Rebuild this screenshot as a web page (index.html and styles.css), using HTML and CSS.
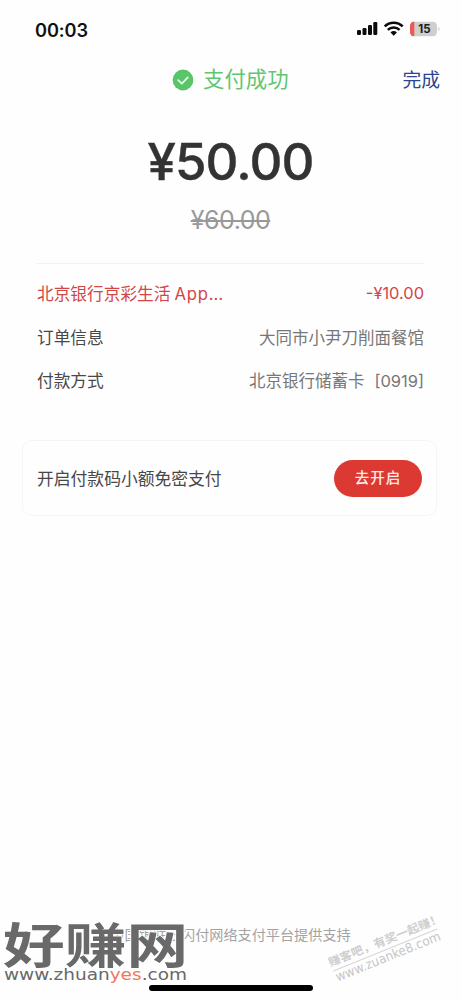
FILE: index.html
```html
<!DOCTYPE html>
<html lang="zh-CN">
<head>
<meta charset="utf-8">
<meta name="viewport" content="width=device-width, initial-scale=1">
<title>支付成功</title>
<link rel="stylesheet" href="styles.css">
</head>
<body>
<div class="screen">
  <header class="status">
    <span class="time">00:03</span>
    <svg class="status-icons" width="84" height="18" viewBox="0 0 84 18">
      <g fill="#0b0b0b">
        <rect x="1" y="10" width="4" height="5" rx="1.2"/>
        <rect x="6.5" y="8" width="4" height="7" rx="1.2"/>
        <rect x="12" y="5" width="4" height="10" rx="1.2"/>
        <rect x="17.3" y="2" width="4" height="13" rx="1.2"/>
      </g>
      <g fill="none" stroke="#0b0b0b" stroke-width="2.5">
        <path d="M28.7 6.4a12.8 12.8 0 0 1 18 0"/>
        <path d="M31.8 9.8a8.4 8.4 0 0 1 11.8 0"/>
      </g>
      <path d="M34.5 12.4a4.6 4.6 0 0 1 6.4 0l-3.2 3.3z" fill="#0b0b0b"/>
      <clipPath id="cell"><rect x="54" y="1.5" width="27" height="15" rx="4.5"/></clipPath>
      <g clip-path="url(#cell)">
        <rect x="54" y="1.5" width="27" height="15" fill="#cfcfcf"/>
        <rect x="54" y="1.5" width="4.3" height="15" fill="#ed5a55"/>
      </g>
      <path d="M82.2 7v4q1.5-.6 1.5-2t-1.5-2z" fill="#cfcfcf"/>
      <text class="battery" x="68.5" y="13.2" text-anchor="middle">15</text>
    </svg>
  </header>
  <nav class="titlebar">
    <svg class="check" width="22" height="22" viewBox="0 0 22 22">
      <circle cx="11" cy="11" r="10.4" fill="#58c668"/>
      <path d="M6.2 11.2l3.6 3.4 6-6.2" fill="none" stroke="#e9fbea" stroke-width="1.8" stroke-linecap="round" stroke-linejoin="round"/>
    </svg>
    <h1 class="title">支付成功</h1>
    <span class="done">完成</span>
  </nav>
  <div class="amount">¥50.00</div>
  <div class="original"><span class="struck">¥60.00</span></div>
  <section class="details">
    <div class="row discount"><span class="promo">北京银行京彩生活<span class="app">App…</span></span><span class="off">-¥10.00</span></div>
    <div class="row order"><span>订单信息</span><span class="value">大同市小尹刀削面餐馆</span></div>
    <div class="row method"><span>付款方式</span><span class="value">北京银行储蓄卡<span class="card-no">[0919]</span></span></div>
  </section>
  <section class="offer">
    <span class="offer-text">开启付款码小额免密支付</span>
    <span class="button">去开启</span>
  </section>
  <footer class="footer">中国银联云闪付网络支付平台提供支持</footer>
  <div class="home"></div>
  <svg class="logo" width="194" height="86" viewBox="0 0 194 86">
    <text class="logo-name" transform="translate(3 57.5) scale(1.04 .8)" x="0" y="0" textLength="178" lengthAdjust="spacingAndGlyphs">好赚网</text>
    <text class="logo-url" x="4" y="75" textLength="183" lengthAdjust="spacingAndGlyphs">www.zhuan<tspan class="yes">yes</tspan>.com</text>
  </svg>
  <svg class="stamp" width="134" height="90" viewBox="0 0 134 90">
    <g transform="translate(6 68) rotate(-22)">
      <text class="stamp-cn" x="-1" y="-4" textLength="121" lengthAdjust="spacingAndGlyphs">赚客吧，有奖一起赚！</text>
      <path d="M0 1H112" stroke="#d6d6d6"/>
      <text class="stamp-url" x="0" y="12.5" textLength="112" lengthAdjust="spacingAndGlyphs">www.zuanke8.com</text>
    </g>
  </svg>
</div>
</body>
</html>
```
FILE: styles.css
```css
* { box-sizing: border-box; }
body { margin: 0; background: #fefefe; }
.screen {
  position: relative;
  display: flex;
  flex-direction: column;
  width: 461px;
  height: 1000px;
  overflow: hidden;
  color: #484848;
  font-family: Inter, "Noto Sans CJK SC", sans-serif;
  white-space: nowrap;
}
.status {
  display: flex;
  justify-content: space-between;
  align-items: center;
  height: 59px;
  padding: 0 21px 0 35px;
}
.time { font-size: 18.2px; font-weight: 600; color: #111; letter-spacing: -.1px; }
.status-icons { display: block; margin-top: -1px; }
.battery { font: 700 11.5px Inter, sans-serif; fill: #1c1c1c; }
.titlebar {
  display: flex;
  align-items: center;
  height: 40px;
  padding: 0 21px 0 172px;
}
.check { margin-top: 2px; }
.title { margin: -1px 0 0 9px; font-size: 21.4px; line-height: 30px; font-weight: 400; color: #62c671; }
.done { margin: -2px 0 0 auto; font-size: 18.8px; color: #2b4590; }
.amount {
  height: 62px;
  margin-top: 32px;
  text-align: center;
  font-size: 51px;
  line-height: 62px;
  font-weight: 500;
  letter-spacing: -.9px;
  color: #333;
  -webkit-text-stroke: .4px #333;
}
.original { height: 32px; margin-top: 11px; text-align: center; font-size: 25px; line-height: 32px; color: #999; letter-spacing: -.5px; }
.struck { text-decoration: line-through; text-decoration-thickness: 2px; }
.details { margin: 27px 37px 0; border-top: 1px solid #f1f1f1; font-size: 16.7px; }
.row { display: flex; justify-content: space-between; align-items: center; height: 43px; }
.discount { height: 51px; padding-top: 7px; color: #d24646; }
.off { font-size: 16.4px; }
.app { margin-left: 4px; letter-spacing: .8px; }
.value { color: #777; font-size: 16.5px; }
.card-no { margin-left: 10px; }
.offer {
  display: flex;
  justify-content: space-between;
  align-items: center;
  height: 76px;
  margin: 39px 24px 0 22px;
  padding: 0 14px;
  border: 1px solid #f5f5f5;
  border-radius: 10px;
}
.offer-text { font-size: 16.8px; }
.button {
  width: 88px;
  height: 37px;
  border-radius: 19px;
  background: #db3932;
  color: #ffecea;
  font-size: 14.5px;
  font-weight: 500;
  line-height: 36px;
  letter-spacing: 1px;
  text-align: center;
}
.footer { height: 22px; margin-top: auto; text-align: center; font-size: 14.15px; line-height: 22px; color: #a3a3a3; }
.home { width: 164px; height: 6px; margin: 39px auto 9px; border-radius: 3px; background: #000; }
.logo { position: absolute; left: 0; top: 905px; }
.logo-name {
  font: 700 60px "Noto Sans CJK SC", sans-serif;
  fill: #696969;
  stroke: #fefefe;
  stroke-width: 2px;
  paint-order: stroke;
}
.logo-url { font: 400 15.5px "DejaVu Sans", sans-serif; fill: #686868; }
.yes { fill: #f07858; }
.stamp { position: absolute; left: 327px; top: 902px; }
.stamp-cn { font: 700 11.5px "Noto Sans CJK SC", sans-serif; fill: #cfcfcf; }
.stamp-url { font: 400 13px "DejaVu Sans", sans-serif; fill: #c6c6c6; }
```
